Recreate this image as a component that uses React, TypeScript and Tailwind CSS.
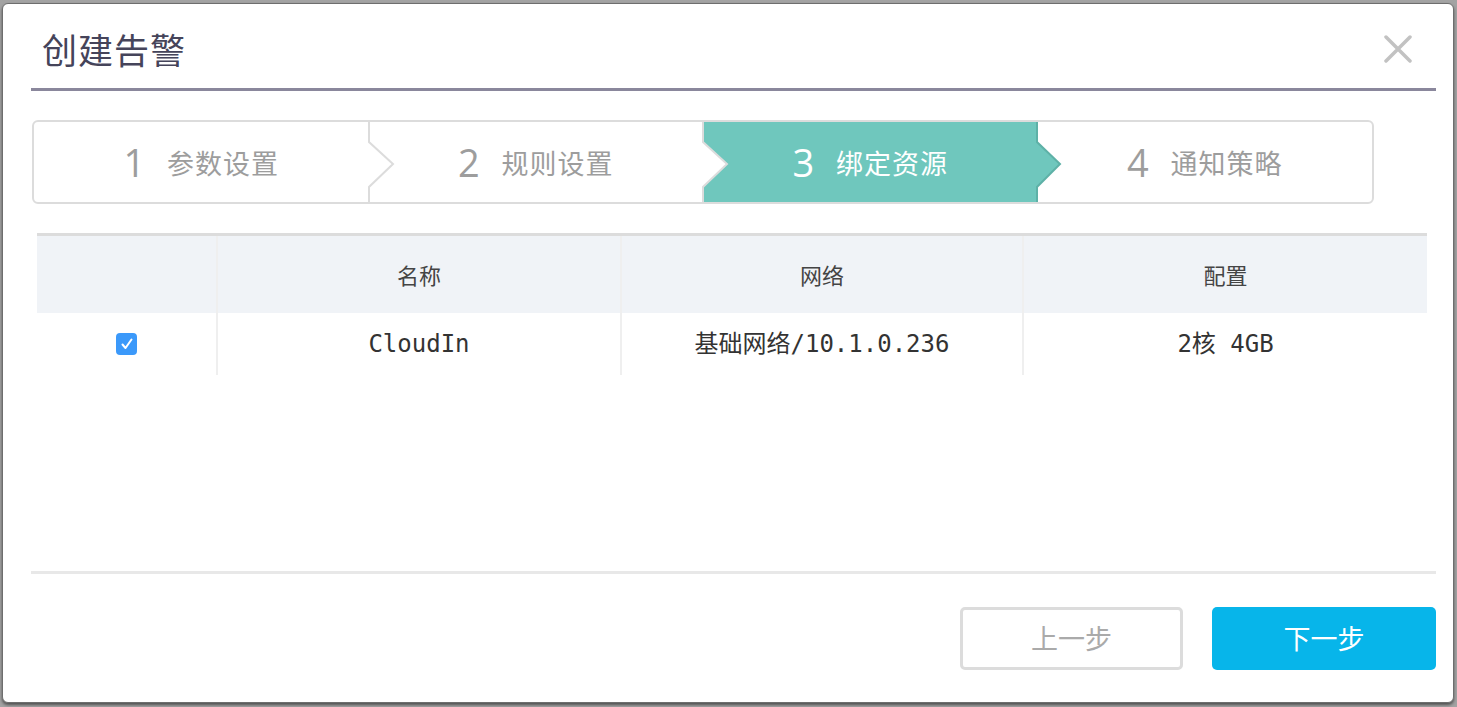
import React from "react";

const steps = [
  { n: "1", label: "参数设置" },
  { n: "2", label: "规则设置" },
  { n: "3", label: "绑定资源" },
  { n: "4", label: "通知策略" },
];
const ACTIVE = 2;

const cjk = { fontFamily: '"Noto Sans CJK SC", "Noto Sans", sans-serif' };
const mono = { fontFamily: '"DejaVu Sans Mono", "Noto Sans CJK SC", monospace' };

function Divider({ nextActive }: { nextActive: boolean }) {
  // chevron between two steps, sits on the right edge of the step
  return (
    <svg
      className="absolute top-0 left-full -ml-[1px] z-10"
      width="28"
      height="80"
      viewBox="0 0 28 80"
    >
      {nextActive && <path d="M0 0 H1 V20 L25 42 L1 65 V80 H0 Z" fill="#fff" />}
      <path d="M1 0 V20 L25 42 L1 65 V80" fill="#fff" stroke="#dcdcdc" strokeWidth="2" />
    </svg>
  );
}

function ActiveArrow() {
  return (
    <svg className="absolute top-0 left-full -ml-[2px] z-10" width="28" height="80" viewBox="0 0 28 80">
      <path d="M0 0 V20 L23 42 L0 65 V80" fill="#6fc7bd" />
      <path d="M1 0 V20 L24 42 L1 65 V80" fill="#6fc7bd" stroke="#5eb1a7" strokeWidth="2" />
    </svg>
  );
}

function Steps() {
  return (
    <div className="ml-[1px] w-[1342px] h-[84px] flex border-2 border-[#dcdcdc] rounded-[6px]">
      {steps.map((s, i) => {
        const active = i === ACTIVE;
        return (
          <div
            key={s.n}
            className={
              "relative flex-1 flex items-center justify-center gap-[22px] " +
              (active ? "bg-[#6fc7bd] text-white" : "text-[#9d9d9d]")
            }
          >
            <span className="text-[38px] font-normal leading-none" style={{ fontFamily: '"Open Sans", sans-serif' }}>
              {s.n}
            </span>
            <span className="text-[27px] tracking-[1px] leading-none" style={cjk}>
              {s.label}
            </span>
            {active && <ActiveArrow />}
            {i < steps.length - 1 && i !== ACTIVE && <Divider nextActive={i + 1 === ACTIVE} />}
          </div>
        );
      })}
    </div>
  );
}

function Check() {
  return (
    <div className="w-[21px] h-[22px] rounded-[4px] bg-[#3b99fa] flex items-center justify-center">
      <svg width="14" height="14" viewBox="0 0 14 14">
        <path d="M2.5 7.5 L5.5 11 L11.5 2.5" fill="none" stroke="#fff" strokeWidth="2" strokeLinecap="round" strokeLinejoin="round" />
      </svg>
    </div>
  );
}

function Table() {
  const cols = "grid grid-cols-[179px_404px_402px_1fr]";
  const cell = "flex items-center justify-center border-l-2 border-[#efefef]";
  return (
    <div className="ml-[6px] w-[1390px] border-t-[3px] border-[#dcdcdc]">
      <div className={cols + " h-[77px] bg-[#f0f3f7] text-[22px] text-[#444]"} style={cjk}>
        <div />
        <div className={cell}>名称</div>
        <div className={cell}>网络</div>
        <div className={cell}>配置</div>
      </div>
      <div className={cols + " h-[62px] text-[24px] text-[#333]"} style={mono}>
        <div className="flex items-center justify-center">
          <Check />
        </div>
        <div className={cell}>CloudIn</div>
        <div className={cell}>基础网络/10.1.0.236</div>
        <div className={cell}>2核 4GB</div>
      </div>
    </div>
  );
}

export default function App() {
  return (
    <div className="w-full h-[707px] bg-[#a3a3a3] pt-[3px] pl-[2px] pr-[3px] pb-[4px]">
      <div className="h-full bg-white border border-[#6e6e6e] rounded-[6px] shadow-[0_2px_3px_rgba(0,0,0,0.5)] pl-[28px] pr-[17px] flex flex-col">
        <div className="h-[87px] flex items-center justify-between border-b-[3px] border-[#8a879c]">
          <h1 className="ml-[11px] mt-[5px] text-[35px] text-[#45445a] tracking-[1px] leading-none" style={cjk}>
            创建告警
          </h1>
          <svg className="mr-[24px] mt-[5px]" width="28" height="28" viewBox="0 0 28 28">
            <path d="M2 2 L26 26 M26 2 L2 26" stroke="#c2c2c2" strokeWidth="3.5" strokeLinecap="round" />
          </svg>
        </div>
        <div className="mt-[29px]">
          <Steps />
        </div>
        <div className="mt-[29px] h-[338px]">
          <Table />
        </div>
        <div className="h-[3px] bg-[#e8e8e8]" />
        <div className="mt-[33px] flex justify-end gap-[29px]">
          <button
            className="w-[223px] h-[63px] border-[3px] border-[#dcdcdc] rounded-[5px] bg-white text-[27px] text-[#aaa]"
            style={cjk}
          >
            上一步
          </button>
          <button className="w-[224px] h-[63px] rounded-[5px] bg-[#07b5ea] text-[27px] text-white" style={cjk}>
            下一步
          </button>
        </div>
      </div>
    </div>
  );
}
